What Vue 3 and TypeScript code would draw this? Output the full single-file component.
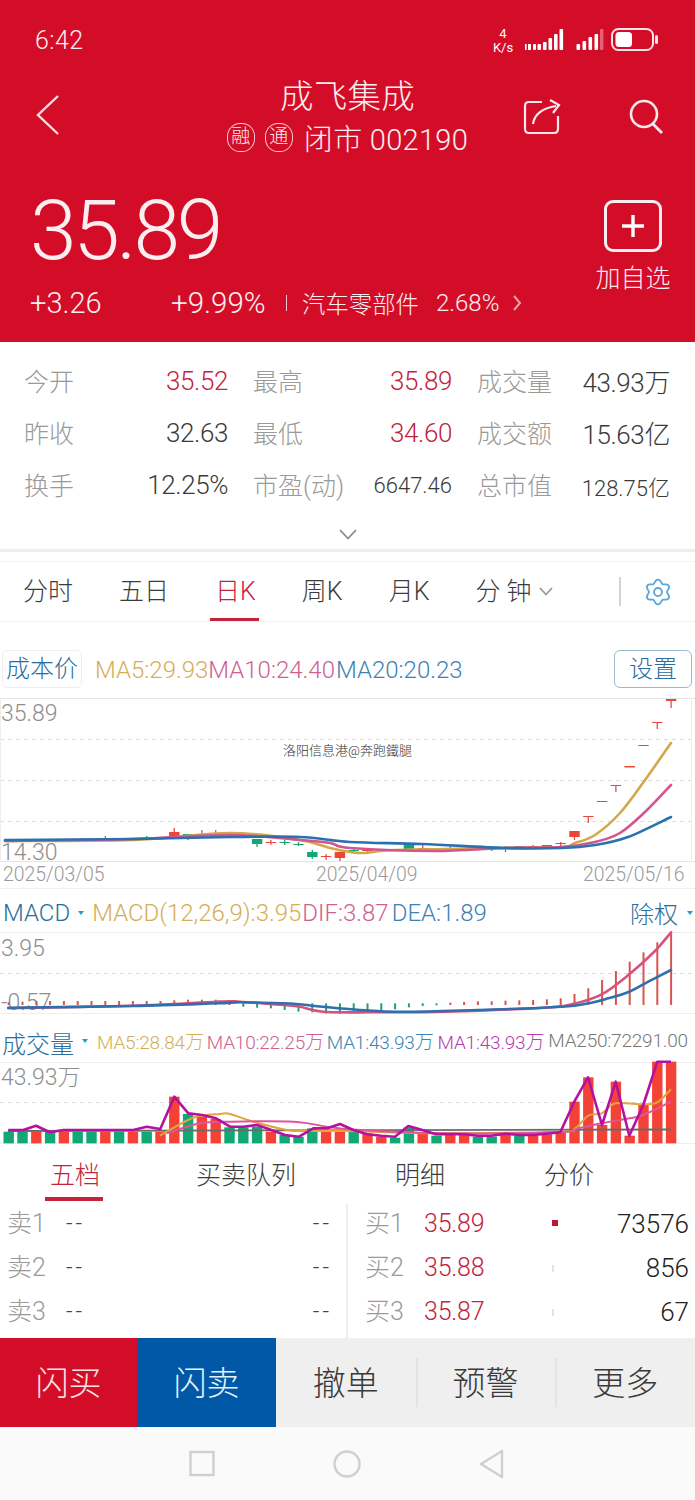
<script setup lang="ts">
type P = [number, number]

const stats = [
  [['今开', '35.52', 'up'], ['最高', '35.89', 'up'], ['成交量', '43.93万', '']],
  [['昨收', '32.63', ''], ['最低', '34.60', 'up'], ['成交额', '15.63亿', '']],
  [['换手', '12.25%', ''], ['市盈(动)', '6647.46', 'small'], ['总市值', '128.75亿', 'small']]
]
const tabs = ['分时', '五日', '日K', '周K', '月K']
const bookTabs = ['五档', '买卖队列', '明细', '分价']
const sells = ['卖1', '卖2', '卖3']
const buys = [
  { l: '买1', p: '35.89', q: '73576', big: true },
  { l: '买2', p: '35.88', q: '856', big: false },
  { l: '买3', p: '35.87', q: '67', big: false }
]
const actions = ['撤单', '预警', '更多']

const X = (i: number) => 8.7 + i * 13.8

const gearPath = (() => {
  const pts: string[] = []
  for (let d = 0; d < 360; d += 6) {
    const t = (d * Math.PI) / 180
    const r = 10.8 + 1.7 * Math.cos(6 * t)
    pts.push(`${(12 + r * Math.sin(t)).toFixed(2)} ${(14 - r * Math.cos(t)).toFixed(2)}`)
  }
  return 'M' + pts.join(' L') + ' Z'
})()

function smooth(pts: P[]): string {
  let d = `M${pts[0][0]} ${pts[0][1]}`
  for (let i = 0; i < pts.length - 1; i++) {
    const a = pts[Math.max(i - 1, 0)]
    const b = pts[i]
    const c = pts[i + 1]
    const e = pts[Math.min(i + 2, pts.length - 1)]
    const c1x = b[0] + (c[0] - a[0]) / 6
    const c1y = b[1] + (c[1] - a[1]) / 6
    const c2x = c[0] - (e[0] - b[0]) / 6
    const c2y = c[1] - (e[1] - b[1]) / 6
    d += ` C${c1x.toFixed(1)} ${c1y.toFixed(1)} ${c2x.toFixed(1)} ${c2y.toFixed(1)} ${c[0]} ${c[1]}`
  }
  return d
}
const z5 = (a: P[]): P[] => a.map(([x, y]) => [+(x / 3).toFixed(1), +(895 + y / 3).toFixed(1)] as P)
const z6 = (a: P[]): P[] => a.map(([x, y]) => [+(345 + x / 3).toFixed(1), +(895 + y / 3).toFixed(1)] as P)

// main chart
const maBlue = smooth([[5, 840], [133, 839], [230, 837], [300, 837], [350, 842], [422, 844], [505, 848], [562, 848], [595, 845], [628, 837], [671, 817]])
const maGold = smooth([[5, 841], [133, 840], [230, 833], [300, 840], [330, 848], [350, 852], [365, 853], [395, 850], [505, 848], [562, 847], [575, 843], [595, 835], [620, 813], [645, 780], [671, 743]])
const maPink = smooth([[5, 841], [133, 839], [230, 835], [300, 840], [330, 843], [350, 848], [435, 851], [505, 848], [562, 847], [595, 842], [620, 833], [645, 812], [671, 785]])
const candles = [
  { i: 7, t: 838, b: 840, w0: 836, w1: 841, c: 'r' }, { i: 10, t: 838, b: 840, w0: 836, w1: 840, c: 'g' },
  { i: 12, t: 832, b: 837, w0: 828, w1: 837, c: 'r' }, { i: 13, t: 834, b: 835, w0: 834, w1: 840, c: 'g' },
  { i: 14, t: 835, b: 836, w0: 830, w1: 838, c: 'r' }, { i: 15, t: 833, b: 837, w0: 830, w1: 837, c: 'r' },
  { i: 16, t: 833, b: 834, w0: 832, w1: 837, c: 'r' }, { i: 18, t: 839, b: 844, w0: 839, w1: 847, c: 'g' },
  { i: 19, t: 842, b: 843, w0: 840, w1: 845, c: 'r' }, { i: 20, t: 842, b: 843, w0: 840, w1: 845, c: 'g' },
  { i: 21, t: 844, b: 845, w0: 842, w1: 846, c: 'g' }, { i: 22, t: 852, b: 857, w0: 850, w1: 859, c: 'g' },
  { i: 23, t: 856, b: 857, w0: 854, w1: 860, c: 'r' }, { i: 24, t: 852, b: 858, w0: 852, w1: 861, c: 'r' },
  { i: 25, t: 850, b: 851, w0: 848, w1: 853, c: 'g' }, { i: 26, t: 850, b: 851, w0: 848, w1: 853, c: 'r' },
  { i: 29, t: 844, b: 849, w0: 844, w1: 851, c: 'g' }, { i: 30, t: 848, b: 849, w0: 844, w1: 851, c: 'r' },
  { i: 32, t: 848, b: 849, w0: 846, w1: 851, c: 'r' }, { i: 35, t: 848, b: 849, w0: 846, w1: 851, c: 'g' },
  { i: 36, t: 848, b: 849, w0: 846, w1: 852, c: 'g' }, { i: 37, t: 846, b: 848, w0: 846, w1: 849, c: 'g' },
  { i: 38, t: 846, b: 848, w0: 845, w1: 849, c: 'r' }, { i: 39, t: 845, b: 848, w0: 845, w1: 849, c: 'r' },
  { i: 40, t: 843, b: 844, w0: 842, w1: 848, c: 'r' }, { i: 41, t: 831, b: 837, w0: 831, w1: 840, c: 'r' },
  { i: 42, t: 816, b: 817, w0: 816, w1: 823, c: 'r' }, { i: 43, t: 801, b: 802, w0: 801, w1: 802, c: 'r' },
  { i: 44, t: 785, b: 786, w0: 785, w1: 792, c: 'r' }, { i: 45, t: 766, b: 767.5, w0: 766, w1: 767, c: 'r' },
  { i: 46, t: 745, b: 746, w0: 745, w1: 746, c: 'r' }, { i: 47, t: 722, b: 723, w0: 722, w1: 729, c: 'r' },
  { i: 48, t: 699, b: 701, w0: 699, w1: 708, c: 'r' }
]

// macd
const macdBars = (() => {
  const out: { x: number; y1: number; y2: number; c: string }[] = []
  const base = 895 + 330 / 3
  const topsR: Record<number, number> = { 32: 323, 33: 321, 34: 319, 35: 319, 36: 317, 37: 316, 38: 315, 39: 313, 40: 310, 41: 297, 42: 280, 43: 255, 44: 228, 45: 200, 46: 172, 47: 142, 48: 112 }
  for (let i = 0; i < 49; i++) {
    if (i < 17) {
      const t = [322, 320, 318, 318, 318, 318, 318, 318, 318, 318, 318, 318, 316, 314, 314, 314, 316][i]
      out.push({ x: X(i), y1: 895 + t / 3, y2: base, c: '#d9534f' })
    } else if (i < 32) {
      const b = [335, 338, 340, 345, 350, 352, 355, 356, 352, 350, 348, 343, 337, 333, 331][i - 17]
      out.push({ x: X(i), y1: 895 + 325 / 3, y2: 895 + b / 3, c: '#1f9e86' })
    } else {
      out.push({ x: X(i), y1: 895 + topsR[i] / 3, y2: base, c: '#d9534f' })
    }
  }
  return out
})()
const dif = smooth([...z5([[25, 340], [400, 332], [650, 320], [720, 320], [850, 330], [900, 335], [970, 350]]), ...z6([[100, 352], [300, 350], [600, 338], [680, 328], [770, 298], [853, 238], [930, 168], [978, 112]])])
const dea = smooth([...z5([[25, 338], [400, 333], [650, 325], [720, 322], [850, 325], [900, 328], [1000, 338]]), ...z6([[150, 350], [400, 345], [650, 335], [729, 325], [790, 310], [853, 290], [910, 260], [978, 225]])])

// volume
const colors = 'GGRGRGGRGRGRRGRRGGGRGGGRRGRRGGRGRRGGRGRRRRRRRRRRR'.split('').slice(0, 49)
const tops = [710, 710, 710, 710, 710, 710, 710, 710, 710, 710, 710, 710, 605, 657, 665, 672, 697, 697, 695, 710, 720, 725, 700, 710, 710, 708, 715, 725, 728, 697, 715, 722, 720, 720, 725, 725, 718, 722, 722, 718, 712, 620, 547, 690, 560, 722, 630, 500, 500]
const volBars = tops.map((t, i) => ({ x: X(i) - 5.2, y: 895 + t / 3, h: (745 - t) / 3, c: colors[i] === 'G' ? '#12a873' : '#f44336' }))
const purplePts: P[] = [
  ...z5([[25, 705], [70, 705], [108, 692], [150, 712], [190, 705], [400, 705], [440, 695], [481, 702], [523, 605], [565, 655], [606, 660], [648, 670], [690, 695], [730, 695], [772, 690], [814, 705], [855, 720], [897, 725], [940, 700], [982, 700], [1020, 687]]),
  ...z6([[25, 705], [67, 718], [108, 722], [150, 725], [190, 693], [232, 705], [273, 718], [357, 718], [398, 722], [439, 722], [481, 716], [522, 720], [564, 720], [605, 716], [646, 712], [688, 620], [729, 547], [771, 690], [812, 560], [853, 722], [895, 630], [937, 500], [978, 500]])
]
const purple = purplePts.map((p) => p.join(',')).join(' ')
const volGold = smooth([...z5([[480, 722], [580, 668], [660, 657], [690, 657], [760, 680], [860, 705], [900, 708], [1040, 708]]), ...z6([[240, 715], [640, 710], [690, 700], [730, 662], [770, 655], [812, 625], [895, 628], [937, 622], [978, 583]])])
const volPink = smooth([...z5([[500, 715], [600, 685], [690, 680], [880, 680], [980, 695]]), ...z6([[0, 702], [100, 708], [300, 715], [640, 712], [700, 700], [770, 685], [853, 670], [895, 660], [978, 620]])])
</script>

<template>
  <div class="page">
    <header class="hero">
      <div class="status">
        <span class="clock">6:42</span>
        <svg class="status-icons" width="180" height="40" viewBox="485 20 180 40">
          <text x="503" y="38" text-anchor="middle" class="st-a">4</text>
          <text x="503" y="52" text-anchor="middle" class="st-b">K/s</text>
          <g fill="#fff">
            <rect x="525" y="44" width="1.6" height="6" />
            <rect x="528" y="44" width="3" height="6" />
            <rect x="533" y="44" width="3" height="6" rx="1" />
            <rect x="537.5" y="44" width="3.6" height="6" rx="1" />
            <rect x="543" y="42" width="3.6" height="8" rx="1" />
            <rect x="548.5" y="38" width="3.6" height="12" rx="1" />
            <rect x="554" y="34" width="3.6" height="16" rx="1" />
            <rect x="559.5" y="29" width="3.6" height="21" rx="1" />
            <rect x="576.5" y="44" width="3.6" height="6" rx="1" />
            <rect x="582.5" y="41" width="3.6" height="9" rx="1" />
            <rect x="588.5" y="37" width="3.6" height="13" rx="1" />
            <rect x="594.5" y="34" width="3.6" height="16" rx="1" />
            <rect x="600" y="29" width="3.4" height="21" rx="1" opacity=".35" />
          </g>
          <rect x="612" y="29" width="41" height="21" rx="6.5" fill="none" stroke="#fbe3e6" stroke-width="2" />
          <rect x="615.5" y="32" width="16.5" height="15" rx="3.5" fill="#fff" />
          <rect x="655" y="35" width="3" height="9" rx="1.5" fill="#fbe3e6" />
        </svg>
      </div>
      <div class="nav">
        <svg class="back" width="24" height="42" viewBox="0 0 24 42">
          <path d="M22 2 L2 21 L22 40" fill="none" stroke="#f8dfe2" stroke-width="2.4" />
        </svg>
        <div class="title-block">
          <div class="name">成飞集成</div>
          <div class="sub">
            <span class="badge">融</span>
            <span class="badge">通</span>
            <span class="code">闭市 002190</span>
          </div>
        </div>
        <div class="nav-actions">
          <svg width="38" height="38" viewBox="0 0 38 38">
            <path d="M19 5 H6 Q2 5 2 9 V32 Q2 36 6 36 H31 Q35 36 35 32 V19" fill="none" stroke="#fbe8ea" stroke-width="2.2" />
            <path d="M10 27 C11 18 19 11 33 9" fill="none" stroke="#fbe8ea" stroke-width="2.2" />
            <path d="M27 3 L36 8 L30 16" fill="none" stroke="#fbe8ea" stroke-width="2.2" />
          </svg>
          <svg width="36" height="38" viewBox="0 0 36 38">
            <circle cx="16" cy="17" r="13" fill="none" stroke="#fbe8ea" stroke-width="2.6" />
            <path d="M25 27 L34 36" stroke="#fbe8ea" stroke-width="2.8" />
          </svg>
        </div>
      </div>
      <div class="quote">
        <div class="quote-left">
          <div class="price">35.89</div>
          <div class="delta">
            <span class="d1">+3.26</span>
            <span class="d2">+9.99%</span>
            <span class="bar"></span>
            <span class="sector">汽车零部件</span>
            <span class="d3">2.68%</span>
            <svg width="10" height="16" viewBox="0 0 10 16">
              <path d="M2 1 L8 8 L2 15" fill="none" stroke="#eda3ac" stroke-width="2" />
            </svg>
          </div>
        </div>
        <div class="add">
          <span class="add-box">
            <svg width="24" height="24" viewBox="0 0 24 24">
              <path d="M12 1 V23 M1 12 H23" stroke="#fff" stroke-width="3.4" />
            </svg>
          </span>
          <span class="add-label">加自选</span>
        </div>
      </div>
    </header>

    <section class="stats">
      <div v-for="(row, r) in stats" :key="r" class="stat-row">
        <div v-for="c in row" :key="c[0]" class="cell">
          <span class="lbl">{{ c[0] }}</span>
          <span class="val" :class="c[2]">{{ c[1] }}</span>
        </div>
      </div>
      <div class="expand">
        <svg width="18" height="11" viewBox="0 0 18 11">
          <path d="M1 1 L9 9.5 L17 1" fill="none" stroke="#8b8b8b" stroke-width="1.8" />
        </svg>
      </div>
    </section>

    <nav class="period">
      <span v-for="(t, i) in tabs" :key="t" class="ptab" :class="{ on: i === 2 }">{{ t }}</span>
      <span class="ptab minute">分 钟
        <svg width="14" height="9" viewBox="0 0 14 9">
          <path d="M1 1 L7 7.5 L13 1" fill="none" stroke="#999" stroke-width="1.8" />
        </svg>
      </span>
      <span class="period-right">
        <i class="vbar"></i>
        <svg width="24" height="28" viewBox="0 0 24 28">
          <path :d="gearPath" fill="none" stroke="#5aa5dc" stroke-width="1.8" stroke-linejoin="round" />
          <circle cx="12" cy="14" r="4" fill="none" stroke="#5aa5dc" stroke-width="1.8" />
        </svg>
      </span>
    </nav>

    <div class="legend main-legend">
      <span class="chip">成本价</span>
      <span class="ma gold">MA5:29.93</span>
      <span class="ma pink">MA10:24.40</span>
      <span class="ma blue ma20">MA20:20.23</span>
      <span class="setting">设置</span>
    </div>

    <svg class="chart" width="695" height="164" viewBox="0 698 695 164">
      <line x1="0" x2="695" y1="698.5" y2="698.5" stroke="#e4e4e4" />
      <line x1="0" x2="695" y1="861.5" y2="861.5" stroke="#e4e4e4" />
      <line v-for="y in [739.5, 780.5, 821.5]" :key="y" x1="0" x2="695" :y1="y" :y2="y" class="dash" />
      <line x1="0.5" x2="0.5" y1="698" y2="862" stroke="#eee" />
      <line x1="691.5" x2="691.5" y1="698" y2="862" stroke="#eee" />
      <text x="1" y="721" class="axis">35.89</text>
      <text x="1" y="860" class="axis">14.30</text>
      <text x="283" y="755" class="mark">洛阳信息港@奔跑鐵腿</text>
      <g v-for="k in candles" :key="k.i">
        <line :x1="X(k.i)" :x2="X(k.i)" :y1="k.w0" :y2="k.w1" :stroke="k.c === 'r' ? '#d9534f' : '#1f9e73'" stroke-width="1.3" />
        <rect :x="X(k.i) - 5.2" :y="k.t" width="10.4" :height="k.b - k.t" :fill="k.c === 'r' ? '#ef4438' : '#12a873'" />
      </g>
      <path :d="maGold" class="ln" stroke="#d2a849" />
      <path :d="maPink" class="ln" stroke="#d2558e" />
      <path :d="maBlue" class="ln" stroke="#2b71b0" />
    </svg>

    <div class="dates">
      <span>2025/03/05</span>
      <span>2025/04/09</span>
      <span>2025/05/16</span>
    </div>

    <div class="legend macd-legend">
      <span class="head">MACD</span><i class="tri"></i>
      <span class="ma gold">MACD(12,26,9):3.95</span>
      <span class="ma pink">DIF:3.87</span>
      <span class="ma blue">DEA:1.89</span>
      <span class="adj">除权</span><i class="tri adj-tri"></i>
    </div>

    <svg class="chart" width="695" height="82" viewBox="0 932 695 82">
      <line x1="0" x2="695" y1="932.5" y2="932.5" stroke="#eee" />
      <line x1="0" x2="695" y1="1013.5" y2="1013.5" stroke="#eee" />
      <line x1="0" x2="695" y1="973.5" y2="973.5" class="dash" />
      <text x="1" y="956" class="axis">3.95</text>
      <text x="1" y="1010" class="axis">-0.57</text>
      <line v-for="b in macdBars" :key="b.x" :x1="b.x" :x2="b.x" :y1="b.y1" :y2="b.y2" :stroke="b.c" stroke-width="2" />
      <path :d="dif" class="ln" stroke="#d6527f" />
      <path :d="dea" class="ln" stroke="#2f6fae" />
    </svg>

    <div class="legend vol-legend">
      <span class="head">成交量</span><i class="tri"></i>
      <span class="vm gold v1">MA5:28.84万</span>
      <span class="vm pink v2">MA10:22.25万</span>
      <span class="vm blue v3">MA1:43.93万</span>
      <span class="vm magenta v4">MA1:43.93万</span>
      <span class="vm grey v5">MA250:72291.00</span>
    </div>

    <svg class="chart" width="695" height="82" viewBox="0 1062 695 82">
      <line x1="0" x2="695" y1="1062.5" y2="1062.5" stroke="#eee" />
      <line x1="0" x2="695" y1="1143.5" y2="1143.5" stroke="#eee" />
      <line x1="0" x2="695" y1="1102.5" y2="1102.5" class="dash" />
      <text x="1" y="1085" class="axis">43.93万</text>
      <rect v-for="b in volBars" :key="b.x" :x="b.x" :y="b.y" width="10.4" :height="b.h" :fill="b.c" />
      <line x1="8" x2="671" y1="1131" y2="1129.5" stroke="#6a6a6a" stroke-width="1.8" />
      <path :d="volGold" class="thin" stroke="#e4a33b" />
      <path :d="volPink" class="thin" stroke="#e0559a" />
      <polyline :points="purple" fill="none" stroke="#b5109f" stroke-width="2.6" stroke-linejoin="round" />
    </svg>

    <div class="book-tabs">
      <span v-for="(t, i) in bookTabs" :key="t" class="btab" :class="['b' + i, { on: i === 0 }]">{{ t }}</span>
    </div>

    <div class="book">
      <div class="side sell">
        <div v-for="s in sells" :key="s" class="row">
          <span class="lbl">{{ s }}</span>
          <span class="dash-text">--</span>
          <span class="dash-text last">--</span>
        </div>
      </div>
      <div class="side buy">
        <div v-for="b in buys" :key="b.l" class="row">
          <span class="lbl">{{ b.l }}</span>
          <span class="bp">{{ b.p }}</span>
          <i class="volbar" :class="{ big: b.big }"></i>
          <span class="bq">{{ b.q }}</span>
        </div>
      </div>
    </div>

    <div class="actions">
      <span class="act buy-btn">闪买</span>
      <span class="act sell-btn">闪卖</span>
      <span v-for="a in actions" :key="a" class="act plain">{{ a }}</span>
    </div>

    <footer class="sysnav">
      <svg width="340" height="30" viewBox="0 0 340 30" class="sys">
        <rect x="1.5" y="3" width="23" height="23" fill="none" stroke="#cfcfcf" stroke-width="2.4" />
        <circle cx="158" cy="15" r="12.5" fill="none" stroke="#cfcfcf" stroke-width="2.4" />
        <path d="M313 2 L292 15 L313 28 Z" fill="none" stroke="#cfcfcf" stroke-width="2.4" stroke-linejoin="round" />
      </svg>
    </footer>
  </div>
</template>

<style>
html, body { margin: 0; background: #fff; }
</style>

<style scoped>
.page {
  width: 695px;
  height: 1500px;
  overflow: hidden;
  background: #fff;
  font-family: Roboto, "Noto Sans CJK SC", sans-serif;
  font-weight: 300;
  color: #333;
  display: flex;
  flex-direction: column;
}
.hero { height: 342px; background: #d30d27; color: #fbeef0; flex: none; }
.status {
  height: 76px;
  padding: 4px 30px 0 35px;
  box-sizing: border-box;
  display: flex;
  align-items: center;
  justify-content: space-between;
}
.clock { font-size: 25px; letter-spacing: .4px; }
.st-a { font: 400 13px Roboto, sans-serif; fill: #fff; }
.st-b { font: 400 13px Roboto, sans-serif; fill: #fff; }
.nav {
  height: 82px;
  display: grid;
  grid-template-columns: 1fr auto 1fr;
  align-items: center;
  padding: 0 36px;
}
.back { margin-top: -4px; }
.title-block { text-align: center; }
.name { font-size: 33.5px; line-height: 40px; letter-spacing: .2px; }
.sub { display: flex; align-items: center; justify-content: center; gap: 10px; height: 41px; }
.badge {
  width: 28px; height: 29px;
  border: 1.5px solid #f6c8ce;
  border-radius: 46%;
  box-sizing: border-box;
  font-size: 19px;
  line-height: 26px;
  text-align: center;
}
.code { font-size: 29px; margin-left: 1px; letter-spacing: .3px; white-space: nowrap; }
.nav-actions { display: flex; justify-content: flex-end; gap: 67px; align-items: center; margin: -2px -5px 0 0; }
.quote { display: flex; justify-content: space-between; padding: 30px 24px 0 30px; }
.quote-left { display: flex; flex-direction: column; }
.price { font-size: 84px; line-height: 84px; letter-spacing: -3.3px; margin-top: 1px; }
.delta { display: flex; align-items: center; height: 40px; margin-top: 10px; }
.d1 { font-size: 29px; width: 141px; }
.d2 { font-size: 29.5px; width: 115px; white-space: nowrap; }
.bar { width: 1px; height: 16px; background: #f4c5cb; margin-right: 15px; }
.sector { font-size: 23.4px; margin-right: 17px; }
.d3 { font-size: 24px; margin-right: 13px; }
.add { display: flex; flex-direction: column; align-items: center; width: 76px; margin-top: 12px; }
.add-box {
  width: 58px; height: 52px;
  border: 3px solid #fbeef0;
  border-radius: 9px;
  box-sizing: border-box;
  display: flex; align-items: center; justify-content: center;
}
.add-label { font-size: 25px; line-height: 36px; margin-top: 9px; }

.stats { height: 210px; padding-top: 13px; box-sizing: border-box; border-bottom: 3px solid #eee; flex: none; }
.stat-row {
  height: 52px;
  padding-left: 24px;
  display: grid;
  grid-template-columns: 204px 199px 193px;
  column-gap: 25px;
  align-items: center;
}
.cell { display: flex; justify-content: space-between; align-items: center; }
.lbl { font-size: 25px; color: #9a9a9a; }
.cell .lbl { margin-top: -3px; }
.val { font-size: 26px; color: #3a3a3a; letter-spacing: -.4px; margin-top: -1px; }
.val.up { color: #c3233b; }
.val.small { font-size: 22px; letter-spacing: 0; margin-top: 1px; }
.expand { display: flex; justify-content: center; padding-top: 18px; }

.period {
  margin-top: 9px;
  height: 61px;
  box-sizing: border-box;
  border-top: 1px solid #f2f2f2;
  border-bottom: 1px solid #f2f2f2;
  padding: 0 25px 0 23px;
  display: flex;
  align-items: center;
  gap: 46px;
  flex: none;
}
.ptab { font-size: 25px; color: #3c3c3c; position: relative; line-height: 59px; }
.ptab.on { color: #c3233b; }
.ptab.on::after {
  content: "";
  position: absolute;
  left: -5px; right: -3px; bottom: 0;
  height: 3px;
  background: #c3233b;
}
.minute { display: flex; align-items: center; gap: 7px; }
.period-right { margin-left: auto; display: flex; align-items: center; gap: 25px; }
.vbar { width: 2px; height: 29px; background: #d4d4d4; }

.legend { display: flex; align-items: center; flex: none; }
.main-legend { height: 76px; padding: 28px 3px 10px 2px; box-sizing: border-box; }
.chip {
  width: 80px; height: 38px;
  box-sizing: border-box;
  border: 1px solid #eee;
  border-radius: 5px;
  font-size: 24px;
  line-height: 36px;
  text-align: center;
  color: #2a6d9c;
  margin-right: 13px;
}
.ma { font-size: 24px; white-space: nowrap; }
.main-legend .ma { margin-top: 1px; }
.gold { color: #d5ad57; }
.pink { color: #d06090; }
.blue { color: #3c82b4; }
.magenta { color: #b83ab0; }
.grey { color: #777; }
.ma20 { margin-left: 1px; }
.setting {
  margin-left: auto;
  width: 78px; height: 38px;
  box-sizing: border-box;
  border: 1px solid #9cbccc;
  border-radius: 6px;
  font-size: 24px;
  line-height: 36px;
  text-align: center;
  color: #2a6d9c;
}
.chart { display: block; flex: none; overflow: visible; }
.dash { stroke: #dcdcdc; stroke-dasharray: 4 4; }
.axis { font-size: 23px; font-weight: 300; fill: #8e8e8e; }
.mark { font-size: 13px; font-weight: 300; fill: #333; }
.ln { fill: none; stroke-width: 2.6; stroke-linecap: round; }
.thin { fill: none; stroke-width: 2; }

.dates {
  height: 27px;
  box-sizing: border-box;
  border-bottom: 1px solid #efefef;
  display: grid;
  grid-template-columns: 313px 267px auto;
  padding-left: 3px;
  font-size: 19.4px;
  line-height: 26px;
  color: #9a9a9a;
  flex: none;
}
.macd-legend { height: 43px; padding: 4px 0 0 3px; box-sizing: border-box; }
.head { font-size: 24px; color: #2a6d9c; }
.tri {
  width: 0; height: 0;
  border-left: 3px solid transparent;
  border-right: 3px solid transparent;
  border-top: 4px solid #2a9bc4;
  margin: 0 8px 0 8px;
}
.macd-legend .pink { margin-left: 1px; }
.macd-legend .blue { margin-left: 3px; }
.adj { margin-left: auto; font-size: 24px; color: #2a6d9c; }
.adj-tri { margin: 0 2px 0 9px; }

.vol-legend { height: 48px; padding: 5px 0 0 2px; box-sizing: border-box; position: relative; }
.vol-legend .tri { margin: 0 9px 0 8px; }
.vol-legend .head { margin-top: 3px; }
.vm { font-size: 19px; white-space: nowrap; letter-spacing: -.2px; }
.v2 { margin-left: 3px; }
.v3 { margin-left: 3px; }
.v4 { margin-left: 4px; }
.v5 { margin-left: 4px; }

.book-tabs { margin-top: 6px; height: 54px; padding: 0 0 8px 50px; position: relative; display: flex; align-items: center; flex: none; box-sizing: border-box; }
.btab { font-size: 25px; color: #3c3c3c; }
.btab.on { color: #c3233b; position: relative; }
.btab.on::after {
  content: "";
  position: absolute;
  left: -5px; right: -3px; top: 42px;
  height: 4px;
  background: #c3233b;
}
.b1 { margin-left: 96px; }
.b2 { margin-left: 99px; }
.b3 { margin-left: 99px; }

.book { height: 134px; display: flex; flex: none; }
.side { box-sizing: border-box; display: flex; flex-direction: column; gap: 6px; padding-top: 1px !important; }
.sell { width: 348px; padding: 0 17px 0 7px; border-right: 2px solid #eee; }
.buy { flex: 1; padding: 0 6px 0 17px; }
.row { display: grid; height: 38px; align-items: center; line-height: 38px; }
.sell .row { grid-template-columns: 59px 1fr auto; }
.buy .row { grid-template-columns: 59px 128px 8px 1fr; }
.dash-text { font-size: 23px; letter-spacing: 3px; color: #444; }
.dash-text.last { margin-right: -3px; }
.bp { font-size: 25px; color: #c3233b; letter-spacing: -.2px; }
.bq { font-size: 26px; color: #222; text-align: right; }
.volbar { display: block; width: 1.5px; height: 7px; background: #e3e3e3; }
.volbar.big { width: 6px; height: 6px; background: #c3142e; margin-top: -2px; }

.actions { height: 89px; display: flex; background: #efefef; flex: none; }
.act { display: flex; align-items: center; justify-content: center; font-size: 33px; padding-bottom: 3px; box-sizing: border-box; }
.buy-btn { width: 137px; background: #d30d27; color: #fbe3e6; }
.sell-btn { width: 139px; background: #0058a6; color: #e3f3fb; }
.plain { flex: 1; color: #3a3a3a; position: relative; }
.plain + .plain::before {
  content: "";
  position: absolute;
  left: 0; top: 20px; bottom: 20px;
  width: 2px;
  background: #e4e4e4;
}
.sysnav { flex: 1; background: #fafafa; display: flex; align-items: center; padding-left: 189px; }
</style>
